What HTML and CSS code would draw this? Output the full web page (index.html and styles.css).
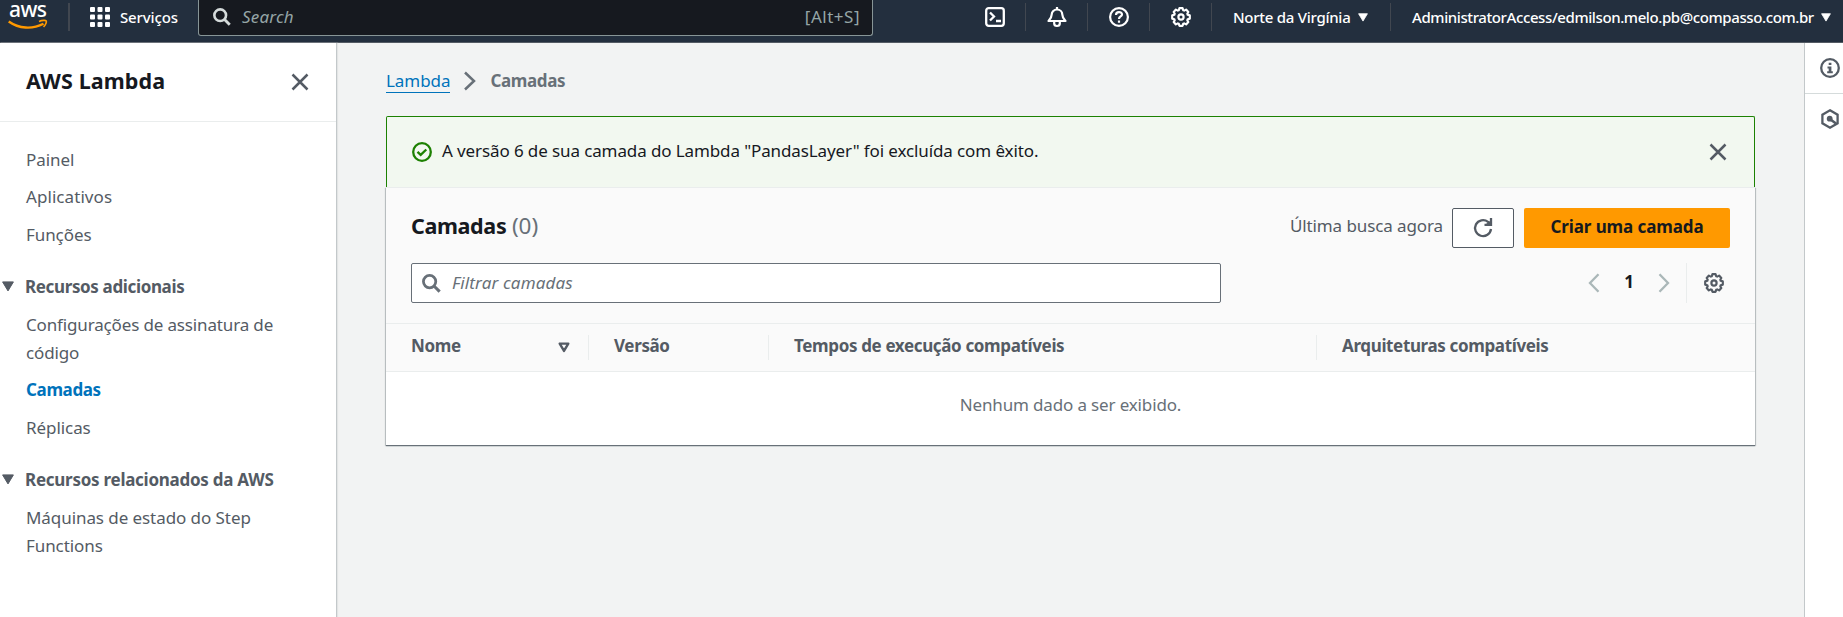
FILE: index.html
```html
<!DOCTYPE html>
<html lang="pt-BR">
<head>
<meta charset="utf-8">
<title>Camadas - AWS Lambda</title>
<link rel="stylesheet" href="styles.css">
</head>
<body>
<svg class="defs" width="0" height="0">
  <symbol id="gear" viewBox="0 0 20 20"><path d="M8.400 1.200h3.200l.6 2 1 .4 1.900-1 2.200 2.300-1 1.800.4 1.100 2.100.6v3.200l-2.100.6-.4 1.100 1 1.800-2.200 2.300-1.900-1-1 .4-.6 2H8.400l-.6-2-1-.4-1.900 1-2.200-2.300 1-1.800-.4-1.100-2.100-.6V8.400l2.100-.6.4-1.100-1-1.800 2.200-2.300 1.900 1 1-.4z" fill="none" stroke="currentColor" stroke-width="2.200" stroke-linejoin="round"/><circle cx="10" cy="10" r="2.600" fill="none" stroke="currentColor" stroke-width="2.200"/></symbol>
  <symbol id="close" viewBox="0 0 20 20"><path d="M2.500 2.500l15 15M17.500 2.500l-15 15" stroke="currentColor" stroke-width="2.500"/></symbol>
  <symbol id="search" viewBox="0 0 20 20"><circle cx="8" cy="8" r="6.500" fill="none" stroke="currentColor" stroke-width="2.900"/><path d="M12.600 12.600l6 6" stroke="currentColor" stroke-width="3.200"/></symbol>
  <symbol id="caret" viewBox="0 0 12 11"><path d="M.6.900h10.800L6 9.900z" fill="currentColor" stroke="currentColor" stroke-linejoin="round"/></symbol>
</svg>

<header class="topbar">
  <a class="logo"><span class="logo-text">aws</span><svg class="smile" width="40" height="10" viewBox="0 0 40 10"><path d="M.7 1.500C11 8.700 24 9.700 35.500 3.800" fill="none" stroke="#f90" stroke-width="2.400"/><path d="M31 1.500c3-1.200 6.600-1.400 7.200-.6.600 1-.5 4-2.700 6" fill="none" stroke="#f90" stroke-width="1.700"/></svg></a>
  <a class="services"><svg width="20" height="20" viewBox="0 0 20 20" fill="currentColor"><rect width="5" height="5" rx="1"/><rect x="7.500" width="5" height="5" rx="1"/><rect x="15" width="5" height="5" rx="1"/><rect y="7.500" width="5" height="5" rx="1"/><rect x="7.500" y="7.500" width="5" height="5" rx="1"/><rect x="15" y="7.500" width="5" height="5" rx="1"/><rect y="15" width="5" height="5" rx="1"/><rect x="7.500" y="15" width="5" height="5" rx="1"/><rect x="15" y="15" width="5" height="5" rx="1"/></svg><span class="t t-serv">Serviços</span></a>
  <div class="topsearch"><svg width="18" height="18"><use href="#search"/></svg><span class="t t-search">Search</span><span class="t t-alt">[Alt+S]</span></div>
  <nav class="tools">
    <a class="tool"><svg width="20" height="20" viewBox="0 0 20 20" fill="none" stroke="currentColor" stroke-width="2.300"><rect x="1.200" y="1.200" width="17.600" height="17.600" rx="2.500"/><path d="M5 5.500l4 4-4 4M11 14h5"/></svg></a>
    <a class="tool"><svg width="20" height="20" viewBox="0 0 20 20" fill="none" stroke="currentColor" stroke-width="2.200"><path d="M1.500 14h17c-2.500-2.500-3.200-4-3.200-6.500A5.300 5 0 0 0 10 2.500a5.300 5 0 0 0-5.300 5c0 2.500-.7 4-3.200 6.500z" stroke-linejoin="round"/><path d="M10 0v2.500M7.200 14.500v2a2.800 2.500 0 0 0 5.600 0v-2"/></svg></a>
    <a class="tool"><svg width="20" height="20" viewBox="0 0 20 20" fill="none" stroke="currentColor" stroke-width="2.200"><circle cx="10" cy="10" r="8.900"/><path d="M7 8c0-4 6-3.700 6-.5 0 2-3 2-3 4.500M10 13.400v2.300"/></svg></a>
    <a class="tool"><svg width="20" height="20"><use href="#gear"/></svg></a>
  </nav>
  <a class="region"><span class="t t-region">Norte da Virgínia</span><svg width="10" height="9"><use href="#caret"/></svg></a>
  <a class="account"><span class="t t-account">AdministratorAccess/edmilson.melo.pb@compasso.com.br</span><svg width="10" height="9"><use href="#caret"/></svg></a>
</header>

<div class="shell">
  <aside class="sidebar">
    <div class="side-head"><h2><span class="t t-lambda">AWS Lambda</span></h2><svg width="20" height="20"><use href="#close"/></svg></div>
    <nav class="side-nav">
      <a><span class="t">Painel</span></a>
      <a><span class="t t-wide">Aplicativos</span></a>
      <a><span class="t">Funções</span></a>
      <h3><svg width="12" height="11"><use href="#caret"/></svg><span class="t t-bold">Recursos adicionais</span></h3>
      <a><span class="t t-conf">Configurações de assinatura de<br>código</span></a>
      <a class="active"><span class="t t-bold">Camadas</span></a>
      <a><span class="t">Réplicas</span></a>
      <h3><svg width="12" height="11"><use href="#caret"/></svg><span class="t t-related">Recursos relacionados da AWS</span></h3>
      <a><span class="t">Máquinas de estado do Step<br>Functions</span></a>
    </nav>
  </aside>

  <main class="content">
    <nav class="crumbs"><a class="t">Lambda</a><svg width="14" height="20" viewBox="0 0 14 20"><path d="M2 1.500l9 8.500-9 8.500" fill="none" stroke="currentColor" stroke-width="2.500"/></svg><b class="t t-bold">Camadas</b></nav>
    <div class="flash"><svg class="ok" width="20" height="20" viewBox="0 0 20 20" fill="none" stroke="currentColor" stroke-width="2.300"><circle cx="10" cy="10" r="8.800"/><path d="M5.500 9.800l3.200 3.100 5.600-5.400"/></svg><span class="t t-flash">A versão 6 de sua camada do Lambda "PandasLayer" foi excluída com êxito.</span><svg class="dismiss" width="20" height="20"><use href="#close"/></svg></div>
    <section class="card">
      <div class="card-head">
        <div class="row">
          <h1><span class="t t-title">Camadas</span> <span class="t t-count">(0)</span></h1>
          <span class="t t-last">Última busca agora</span>
          <button class="refresh"><svg width="20" height="20" viewBox="0 0 20 20"><path d="M18 11a8 8 0 1 1-3-7.200l1.500 1.700" fill="none" stroke="currentColor" stroke-width="2.300"/><path d="M18 0v6.800h-6.500" fill="none" stroke="currentColor" stroke-width="2.300"/><path d="M13 6l4-3v3z" fill="currentColor"/></svg></button>
          <button class="create"><span class="t t-create">Criar uma camada</span></button>
        </div>
        <div class="row filter-row">
          <div class="filter"><svg width="19" height="19"><use href="#search"/></svg><span class="t t-filter">Filtrar camadas</span></div>
          <div class="pager"><svg width="12" height="20" viewBox="0 0 12 20"><path d="M10.500 1.300L2 10l8.500 8.700" fill="none" stroke="currentColor" stroke-width="2.300"/></svg><b>1</b><svg width="12" height="20" viewBox="0 0 12 20"><path d="M1.500 1.300L10 10l-8.500 8.700" fill="none" stroke="currentColor" stroke-width="2.300"/></svg></div>
          <div class="prefs"><svg width="20" height="20"><use href="#gear"/></svg></div>
        </div>
      </div>
      <div class="thead">
        <div class="th"><span class="t t-bold">Nome</span><svg width="12" height="11" viewBox="0 0 12 11"><path d="M1.700 1.600h8.600L6 8.900z" fill="none" stroke="currentColor" stroke-width="2.400" stroke-linejoin="round"/></svg></div>
        <div class="th"><span class="t t-bold">Versão</span></div>
        <div class="th"><span class="t t-bold">Tempos de execução compatíveis</span></div>
        <div class="th"><span class="t t-bold">Arquiteturas compatíveis</span></div>
      </div>
      <div class="empty"><span class="t t-empty">Nenhum dado a ser exibido.</span></div>
    </section>
  </main>

  <aside class="rail">
    <a><svg width="20" height="20" viewBox="0 0 20 20"><circle cx="10" cy="10" r="8.800" fill="none" stroke="currentColor" stroke-width="2.300"/><path d="M8.700 4.700h2.700v2.400H8.700zM7.500 8.400h3.900v4.800h1.400v2H7.200v-2h1.500v-2.800H7.500z" fill="currentColor"/></svg></a>
    <a><svg width="20" height="20" viewBox="0 0 20 20"><path d="M10 1.300l7.600 4.400v8.600L10 18.700l-7.600-4.400V5.700z" fill="none" stroke="currentColor" stroke-width="2.300"/><circle cx="9.700" cy="9.700" r="2.900" fill="currentColor"/><path d="M10.500 10.500l5.500 4" stroke="currentColor" stroke-width="2.500"/></svg></a>
  </aside>
</div>
</body>
</html>
```
FILE: styles.css
```css
* { box-sizing: border-box; }
body { margin: 0; height: 617px; overflow: hidden; font: 17px/28px "Noto Sans", "Open Sans", sans-serif; color: #545b64; background: #f2f3f3; }
svg { display: block; flex: none; overflow: visible; }
.defs { position: absolute; }
h1, h2, h3 { margin: 0; font-size: inherit; }

.t { white-space: nowrap; letter-spacing: -.07px; }
.t-wide { letter-spacing: .07px; }
.t-bold { letter-spacing: -.36px; }
.t-related { letter-spacing: -.26px; }
.t-conf, .t-empty { letter-spacing: -.15px; }
.t-flash { letter-spacing: -.11px; padding-bottom: 2px; }
.t-last { padding-bottom: 4px; letter-spacing: -.1px; margin-right: -1px; }
.t-create { letter-spacing: -.1px; padding-bottom: 2px; }
.t-filter { letter-spacing: .15px; }

.topbar { display: flex; height: 43px; background: #232f3e; border-bottom: 1px solid #545b64; color: #fff; font-size: 15px; font-weight: 500; }
.topbar > * { flex: none; }
.logo { width: 70px; height: 31px; padding-left: 8px; background: linear-gradient(#414750, #414750) right bottom / 2px 28px no-repeat; }
.logo-text { display: block; height: 20px; font-size: 21px; line-height: 19px; letter-spacing: -.6px; padding-left: 1px; }
.services { display: flex; align-items: center; width: 128px; height: 34px; padding-left: 20px; gap: 10px; }
.t-serv { letter-spacing: -.15px; }
.topsearch { display: flex; align-items: center; width: 675px; height: 36px; padding: 0 12px 1px 14px; background: #16191f; border: 1px solid #879596; border-top: 0; border-radius: 0 0 3px 3px; color: #95a5a6; font-size: 17px; font-weight: 400; }
.topsearch svg { color: #d5dbdb; margin-right: 11px; }
.t-search { font-style: italic; letter-spacing: .2px; }
.t-alt { margin-left: auto; letter-spacing: .5px; }
.tools { display: flex; margin-left: 91px; padding-top: 3px; }
.tool { display: flex; justify-content: center; align-items: center; width: 62px; height: 28px; border-right: 1px solid #414750; }
.region { display: flex; align-items: center; width: 179px; height: 28px; margin-top: 3px; padding-left: 21px; gap: 8px; border-right: 1px solid #414750; }
.t-region { letter-spacing: -.27px; }
.account { display: flex; align-items: center; height: 28px; margin-top: 3px; padding-left: 21px; gap: 7px; }
.t-account { letter-spacing: -.4px; }

.shell { display: grid; grid-template-columns: 337px 1fr 39px; height: 574px; }
.sidebar { background: #fff; border-right: 1px solid #c3c8ca; box-shadow: 1px 0 1px #e3e5e5; }
.side-head { display: flex; justify-content: space-between; align-items: center; height: 79px; padding: 0 26px; border-bottom: 1px solid #eaeded; }
.side-head h2 { font-size: 21.500px; color: #16191f; padding-bottom: 2px; }
.t-lambda { letter-spacing: .1px; }
.side-nav { padding: 24px 0 0 26px; }
.side-nav a { display: block; margin-bottom: 9.400px; }
.side-nav h3 { display: flex; align-items: center; margin: 24px 0 10px -24px; gap: 11px; }
.side-nav .active { color: #0073bb; font-weight: 700; }

.content { padding: 24px 49px 0; }
.crumbs { display: flex; align-items: center; height: 28px; color: #687078; gap: 13px; margin-bottom: 21px; }
.crumbs a { color: #0073bb; height: 25px; line-height: 25px; border-bottom: 1px solid #0073bb; margin-bottom: 1px; }
.flash { display: flex; height: 71px; padding: 0 26px 0 25px; border: 1px solid #1d8102; border-bottom: 0; border-radius: 2px 2px 0 0; background: #f2f8f0; color: #16191f; align-items: center; gap: 10px; }
.ok { color: #1d8102; }
.dismiss { margin-left: auto; color: #545b64; }
.card { height: 258px; background: #fff; border-top: 1px solid #eaeded; box-shadow: 0 1px 1px #687078, -1px 1px 1px #c9cdce, 1px 1px 1px #c9cdce; }
.card-head { height: 135px; padding: 20px 25px 0; background: #fafafa; }
.row { display: flex; height: 40px; align-items: center; }
h1 { flex: 1; font-size: 21.500px; color: #16191f; padding-bottom: 5px; }
.t-title { letter-spacing: -.35px; }
.t-count { font-weight: 400; font-size: 22.500px; color: #687078; }
button { height: 40px; border-radius: 2px; font: inherit; padding: 0; display: flex; align-items: center; justify-content: center; }
.refresh { width: 62px; margin: 0 10px; background: #fff; border: 1px solid #545b64; color: #545b64; }
.create { width: 206px; background: #f90; border: 0; color: #16191f; font-weight: 700; }
.filter-row { margin-top: 15px; }
.filter { display: flex; align-items: center; width: 810px; height: 40px; background: #fff; border: 1px solid #687078; border-radius: 2px; padding-left: 10px; gap: 11px; font-style: italic; color: #687078; }
.pager { display: flex; align-items: center; justify-content: space-between; width: 82px; margin-left: auto; color: #aab7b8; }
.pager b { color: #16191f; padding-bottom: 2px; }
.prefs { display: flex; align-items: center; height: 40px; margin-left: 16px; padding: 0 6px 0 17px; border-left: 1px solid #eaeded; }
.thead { display: grid; grid-template-columns: 203px 180px 548px 1fr; height: 49px; background: #fafafa; border: solid #eaeded; border-width: 1px 0; padding: 11px 0; font-weight: 700; }
.th { display: flex; align-items: center; justify-content: space-between; height: 25px; padding: 0 18px 0 25px; border-right: 1px solid #eaeded; }
.th .t { line-height: 22px; padding-bottom: 3px; }
.th svg { margin-bottom: 1px; }
.th:last-child { border: 0; }
.empty { height: 66px; text-align: center; padding-top: 19px; color: #687078; }

.rail { background: #fff; border-left: 1px solid #c3c8ca; }
.rail a { display: flex; justify-content: center; align-items: center; height: 51px; padding-left: 12px; border-bottom: 1px solid #d5dbdb; }
.rail a + a { border: 0; height: 50px; }
```
